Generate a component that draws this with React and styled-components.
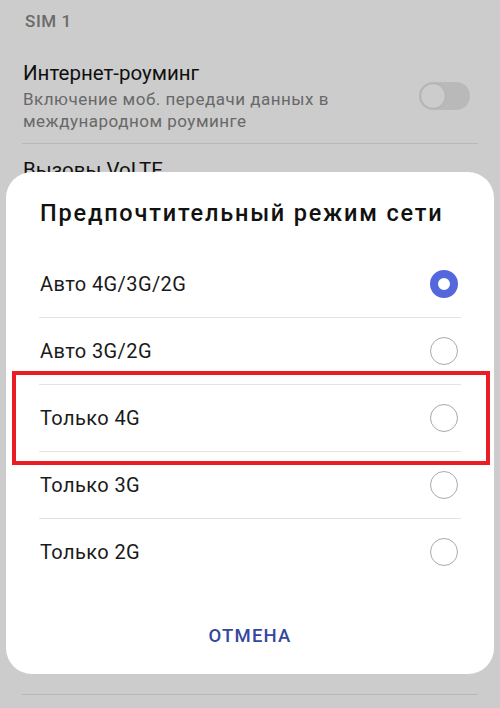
import styled, { createGlobalStyle } from "styled-components";

const GlobalStyle = createGlobalStyle`
    html, body {
        margin: 0;
        padding: 0;
        background: #ffffff;
    }
    body {
        font-family: Roboto, "Noto Sans", "Liberation Sans", sans-serif;
    }
`

const Screen = styled.div`
    position: relative;
    width: 500px;
    height: 708px;
    overflow: hidden;
    background: #ffffff;
`

const Settings = styled.div`
    padding: 0 22px;
`

const SectionTitle = styled.div`
    height: 45px;
    padding: 11px 0 0 3px;
    box-sizing: border-box;
    font-size: 17px;
    line-height: 20px;
    font-weight: 500;
    letter-spacing: 0.6px;
    color: #868686;
`

const Item = styled.div`
    display: flex;
    align-items: ${(p) => (p.top ? "flex-start" : "center")};
    height: ${(p) => p.height || 110}px;
    box-sizing: border-box;
    border-bottom: 1px solid #e7e7e7;
    padding: ${(p) => p.pad || "0"};
`

const ItemText = styled.div`
    flex: 1;
    display: flex;
    flex-direction: column;
`

const ItemTitle = styled.div`
    font-size: 20.5px;
    line-height: 26px;
    color: #141414;
`

const ItemSub = styled.div`
    font-size: 17px;
    line-height: 22px;
    letter-spacing: 0.5px;
    color: #838383;
    margin-top: 2px;
`

const Switch = styled.div`
    position: relative;
    width: 51px;
    height: 28px;
    border-radius: 14px;
    background: #e8e8e8;
    margin-right: 8px;
    flex-shrink: 0;

    &::after {
        content: "";
        position: absolute;
        left: 1px;
        top: 1px;
        width: 24px;
        height: 24px;
        border-radius: 50%;
        background: #ffffff;
        border: 1px solid #dcdcdc;
    }
`

const Scrim = styled.div`
    position: absolute;
    inset: 0;
    background: rgba(0, 0, 0, 0.2);
`

const Dialog = styled.div`
    position: absolute;
    left: 6px;
    top: 172px;
    width: 488px;
    height: 502px;
    box-sizing: border-box;
    background: #ffffff;
    border-radius: 26px;
    padding: 26px 33px 14px;
    display: flex;
    flex-direction: column;
`

const DialogTitle = styled.div`
    font-size: 23.5px;
    line-height: 30px;
    font-weight: 500;
    letter-spacing: 1.8px;
    color: #111111;
    padding-left: 1px;
    white-space: nowrap;
`

const Options = styled.div`
    margin-top: 22px;
    display: flex;
    flex-direction: column;
`

const Option = styled.label`
    position: relative;
    display: flex;
    align-items: center;
    justify-content: space-between;
    height: 67px;
    box-sizing: border-box;
    border-top: ${(p) => (p.first ? "none" : "1px solid #e3e3e3")};
    padding: 0 3px 0 1px;
    font-size: 20px;
    letter-spacing: 0.4px;
    color: #1a1a1a;

    ${(p) =>
        p.highlight &&
        `
        &::after {
            content: "";
            position: absolute;
            left: -27px;
            right: -29px;
            top: -14px;
            bottom: -14px;
            border: 4px solid #ec1c24;
            pointer-events: none;
        }
    `}
`

const Radio = styled.span`
    width: 28px;
    height: 28px;
    box-sizing: border-box;
    border-radius: 50%;
    border: ${(p) => (p.checked ? "8px solid #5568db" : "1.5px solid #a9a9a9")};
    background: #ffffff;
    flex-shrink: 0;
`

const Cancel = styled.button`
    margin-top: auto;
    height: 48px;
    border: none;
    background: none;
    font-family: inherit;
    font-size: 18.5px;
    font-weight: 500;
    color: #35479d;
    letter-spacing: 1.2px;
    cursor: pointer;
`

const options = [
    "Авто 4G/3G/2G",
    "Авто 3G/2G",
    "Только 4G",
    "Только 3G",
    "Только 2G",
]

export default function App() {
    return (
        <Screen>
            <GlobalStyle />
            <Settings>
                <SectionTitle>SIM 1</SectionTitle>
                <Item height={99} pad="4px 0 0 1px">
                    <ItemText>
                        <ItemTitle>Интернет-роуминг</ItemTitle>
                        <ItemSub>
                            Включение моб. передачи данных в
                            <br />
                            международном роуминге
                        </ItemSub>
                    </ItemText>
                    <Switch />
                </Item>
                <Item height={110} top pad="13px 0 0 1px">
                    <ItemText>
                        <ItemTitle>Вызовы VoLTE</ItemTitle>
                    </ItemText>
                </Item>
                <Item height={110} />
                <Item height={110} />
                <Item height={110} />
                <Item height={111} />
            </Settings>
            <Scrim />
            <Dialog>
                <DialogTitle>Предпочтительный режим сети</DialogTitle>
                <Options>
                    {options.map((o, i) => (
                        <Option key={o} first={i === 0} highlight={o === "Только 4G"}>
                            {o}
                            <Radio checked={i === 0} />
                        </Option>
                    ))}
                </Options>
                <Cancel>ОТМЕНА</Cancel>
            </Dialog>
        </Screen>
    )
}
